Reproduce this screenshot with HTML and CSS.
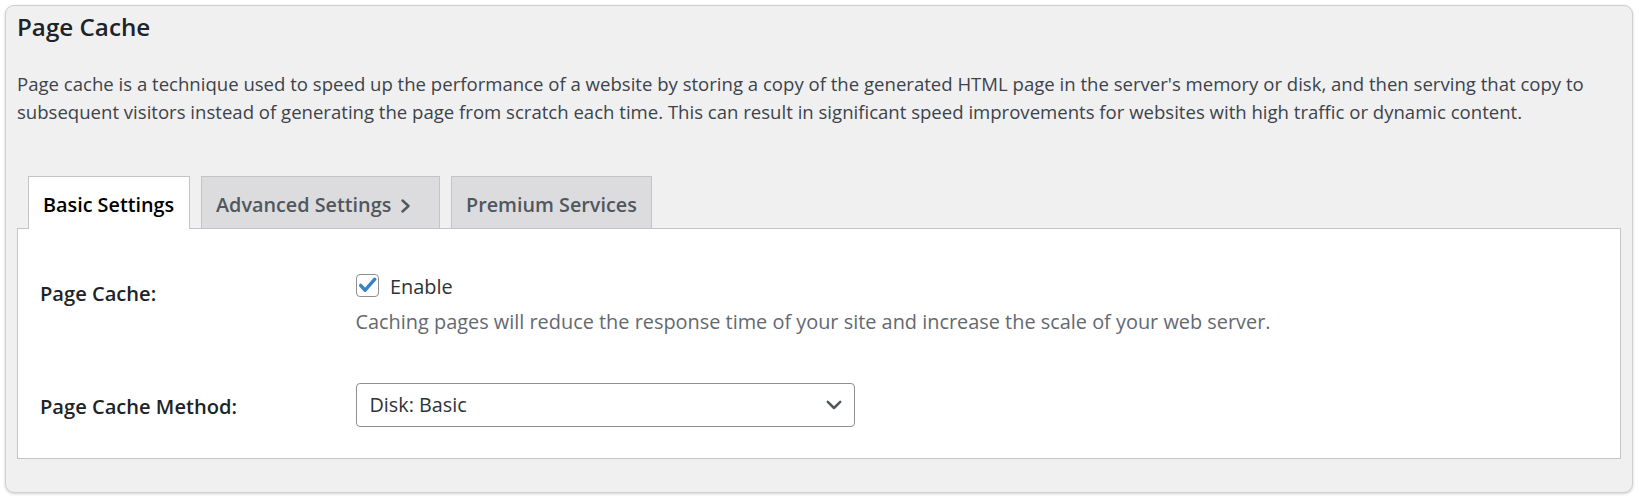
FILE: index.html
```html
<!DOCTYPE html>
<html>
<head>
<meta charset="utf-8">
<title>Page Cache</title>
<link rel="stylesheet" href="styles.css">
</head>
<body>
<div class="box">
  <h2 class="title">Page Cache</h2>
  <p class="desc">Page cache is a technique used to speed up the performance of a website by storing a copy of the generated HTML page in the server's memory or disk, and then serving that copy to subsequent visitors instead of generating the page from scratch each time. This can result in significant speed improvements for websites with high traffic or dynamic content.</p>

  <div class="tabs">
    <div class="tab tab-basic active">Basic Settings</div>
    <div class="tab tab-advanced">Advanced Settings<svg class="tab-chev" width="12" height="14" viewBox="0 0 12 14"><polyline points="2.5,1.5 8.5,7 2.5,12.5" fill="none" stroke="#50575e" stroke-width="2.4" stroke-linecap="round" stroke-linejoin="round"/></svg></div>
    <div class="tab tab-premium">Premium Services</div>
  </div>

  <div class="panel">
    <div class="row row-enable">
      <div class="label label-first">Page Cache:</div>
      <div class="field">
        <label class="check-line">
          <span class="cb"><svg width="21" height="21" viewBox="0 0 21 21"><polyline points="3.6,10.4 8.2,15.2 17.8,4.2" fill="none" stroke="#3582c4" stroke-width="3.4" stroke-linecap="round" stroke-linejoin="round"/></svg></span>
          <span class="check-text">Enable</span>
        </label>
        <div class="hint">Caching pages will reduce the response time of your site and increase the scale of your web server.</div>
      </div>
    </div>
    <div class="row row-method">
      <div class="label label-second">Page Cache Method:</div>
      <div class="field">
        <div class="select">
          <span class="select-text">Disk: Basic</span>
          <svg class="select-chev" width="16" height="10" viewBox="0 0 16 10"><polyline points="1.8,1.8 8,8 14.2,1.8" fill="none" stroke="#50575e" stroke-width="2.5" stroke-linecap="round" stroke-linejoin="round"/></svg>
        </div>
      </div>
    </div>
  </div>
</div>
</body>
</html>
```
FILE: styles.css
```css
html, body {
  margin: 0;
  background: #ffffff;
}
body {
  padding: 5px;
  font-family: "Open Sans", "Noto Sans", sans-serif;
  color: #1d2327;
}
.box {
  box-sizing: border-box;
  width: 1628px;
  background: #f0f0f1;
  border: 1px solid #cfcfd1;
  border-radius: 9px;
  box-shadow: 0 1px 3px rgba(0, 0, 0, 0.18);
  padding: 5px 11px 33px 11px;
}
.title {
  margin: 0;
  font-size: 24.2px;
  font-weight: 600;
  line-height: 32px;
  color: #1d2327;
}
.desc {
  margin: 27px 0 0 0;
  font-size: 18.57px;
  line-height: 27.6px;
  color: #3c434a;
}
.tabs {
  display: flex;
  align-items: flex-end;
  gap: 11px;
  margin: 51px 0 0 11px;
}
.tab {
  box-sizing: border-box;
  height: 52px;
  border: 1px solid #c3c4c7;
  border-bottom: none;
  background: #dcdcde;
  color: #50575e;
  padding: 13.5px 0 0 14px;
  font-size: 19.8px;
  font-weight: 600;
  line-height: 27px;
  white-space: nowrap;
}
.tab.active {
  background: #ffffff;
  color: #000000;
  height: 53px;
  margin-bottom: -1px;
  position: relative;
  z-index: 1;
}
.tab-basic { width: 162px; }
.tab-advanced { width: 239px; }
.tab-premium { width: 201px; }
.tab-chev {
  margin-left: 9px;
  vertical-align: -1px;
}
.panel {
  background: #ffffff;
  border: 1px solid #c3c4c7;
  padding: 44px 22px 30.7px 22px;
}
.row {
  display: grid;
  grid-template-columns: 315.5px 1fr;
}
.row-method {
  margin-top: 47px;
}
.label {
  font-size: 20.1px;
  font-weight: 600;
  line-height: 28px;
  color: #1d2327;
}
.label-first { padding-top: 6.6px; }
.label-second { padding-top: 10px; }
.check-line {
  display: flex;
  align-items: flex-start;
  height: 28px;
  font-size: 19.9px;
  line-height: 28px;
  color: #2c3338;
}
.cb {
  box-sizing: border-box;
  width: 23px;
  height: 23px;
  margin-top: 1px;
  margin-right: 11.5px;
  border: 1px solid #8c8f94;
  border-radius: 4px;
  background: #ffffff;
  display: flex;
}
.hint {
  margin-top: 7px;
  font-size: 19.9px;
  line-height: 28px;
  color: #646970;
}
.select {
  box-sizing: border-box;
  width: 499px;
  height: 44px;
  border: 1px solid #8c8f94;
  border-radius: 4px;
  background: #ffffff;
  display: flex;
  align-items: center;
  justify-content: space-between;
  padding: 0 11.5px 0 13px;
  font-size: 19.8px;
  line-height: 28px;
  color: #2c3338;
}
.select-chev {
  display: block;
}
```
